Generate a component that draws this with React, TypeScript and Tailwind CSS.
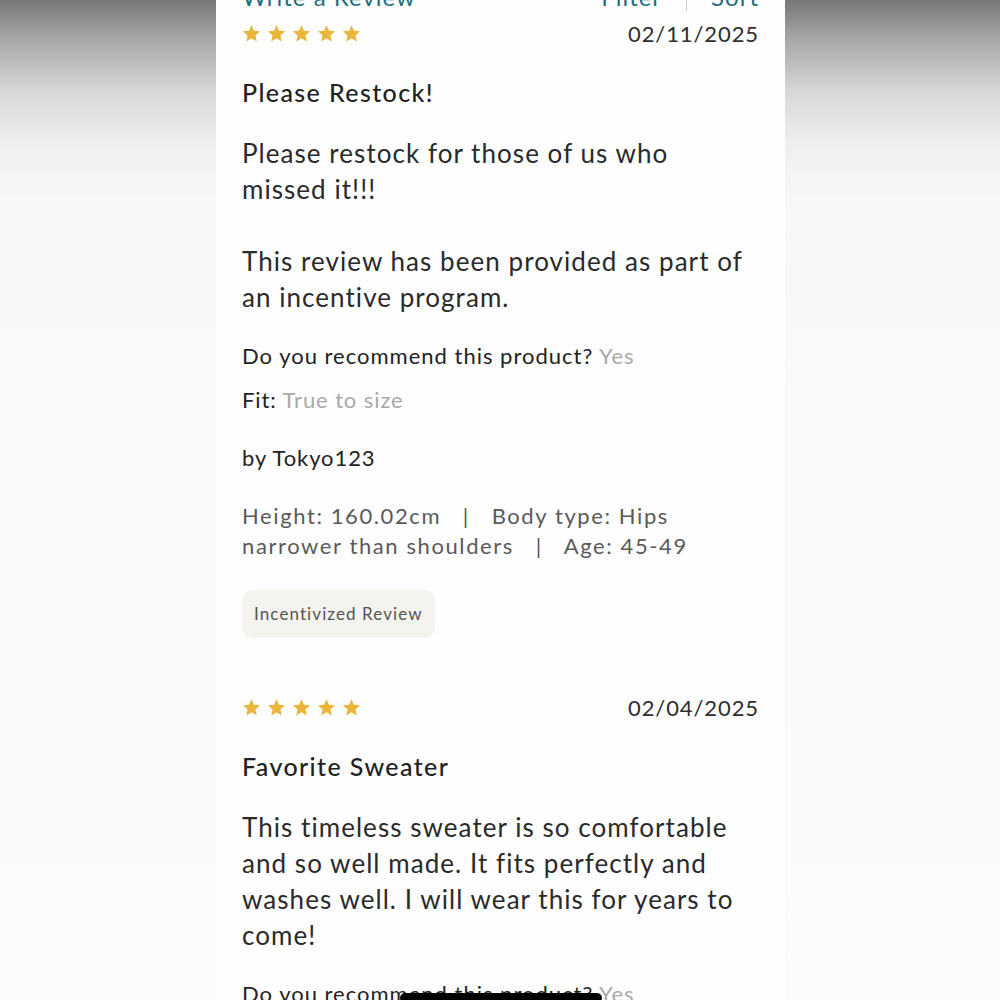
import React from 'react'

const Stars = () => (
  <div className="flex items-center gap-[6px]">
    {[0, 1, 2, 3, 4].map(i => (
      <svg key={i} width="19" height="19" viewBox="0 0 24 24" className="fill-[#e9b53a]">
        <path d="M12 1.5l3.1 7.1 7.7.7-5.8 5.1 1.7 7.6L12 18l-6.7 4 1.7-7.6-5.8-5.1 7.7-.7z" />
      </svg>
    ))}
  </div>
)

type Review = {
  date: string
  title: string
  body: string[][]
  meta?: boolean
}

const ReviewBlock = ({ r }: { r: Review }) => (
  <div className="flex flex-col">
    <div className="flex items-center justify-between h-[24px]">
      <Stars />
      <span className="text-[22px] text-[#2e2e2e] tracking-[0.9px]">{r.date}</span>
    </div>
    <h3 className="mt-[32px] text-[25px] leading-[30px] font-medium text-[#222] tracking-[1.4px]">{r.title}</h3>
    <div className="mt-[28px] flex flex-col gap-[36px] text-[26px] leading-[36px] text-[#2a2a2a] tracking-[1.05px]">
      {r.body.map((para, i) => (
        <p key={i} className="flex flex-col">
          {para.map((line, j) => (
            <span key={j} className="whitespace-nowrap">{line}</span>
          ))}
        </p>
      ))}
    </div>
    <div className="mt-[26px] text-[22px] leading-[30px] text-[#222] tracking-[1px]">
      Do you recommend this product? <span className="text-[#a9a9a9]">Yes</span>
    </div>
    {r.meta && (
      <>
        <div className="mt-[14px] text-[22px] leading-[30px] text-[#222] tracking-[0.9px]">
          Fit: <span className="text-[#a9a9a9]">True to size</span>
        </div>
        <div className="mt-[28px] text-[22px] leading-[30px] text-[#222] tracking-[0.9px]">by Tokyo123</div>
        <div className="mt-[28px] flex flex-col text-[22px] leading-[30px] text-[#5a5a5a] tracking-[1.6px]">
          <span className="whitespace-nowrap">Height: 160.02cm&nbsp;&nbsp;&nbsp;|&nbsp;&nbsp;&nbsp;Body type: Hips</span>
          <span className="whitespace-nowrap">narrower than shoulders&nbsp;&nbsp;&nbsp;|&nbsp;&nbsp;&nbsp;Age: 45-49</span>
        </div>
        <div className="mt-[29px] self-start rounded-[10px] bg-[#f4f3ef] px-[12px] h-[48px] flex items-center text-[17px] text-[#555] tracking-[1.1px]">
          Incentivized Review
        </div>
      </>
    )}
  </div>
)

const reviews: Review[] = [
  {
    date: '02/11/2025',
    title: 'Please Restock!',
    body: [
      ['Please restock for those of us who', 'missed it!!!'],
      ['This review has been provided as part of', 'an incentive program.'],
    ],
    meta: true,
  },
  {
    date: '02/04/2025',
    title: 'Favorite Sweater',
    body: [
      [
        'This timeless sweater is so comfortable',
        'and so well made. It fits perfectly and',
        'washes well. I will wear this for years to',
        'come!',
      ],
    ],
  },
]

export default function App() {
  return (
    <div
      className="relative w-[1000px] h-[1000px] overflow-hidden flex bg-[linear-gradient(to_bottom,#777_0px,#a8a8a8_40px,#d6d6d6_90px,#eeeeee_140px,#f8f8f8_200px,#fbfbfb_100%)]"
      style={{ fontFamily: 'Lato, "Noto Sans", sans-serif' }}
    >
      <div className="ml-[216px] w-[569px] h-full bg-[#fefefe] px-[26px] overflow-hidden">
        <div className="-mt-[18px] flex items-center justify-between h-[30px] text-[24px] text-[#1f6f7d] tracking-[1px]">
          <span>Write a Review</span>
          <div className="flex items-center gap-[24px]">
            <span>Filter</span>
            <span className="h-[28px] w-px bg-[#ccc]" />
            <span>Sort</span>
          </div>
        </div>
        <div className="mt-[9px] flex flex-col gap-[57px]">
          {reviews.map((r, i) => (
            <ReviewBlock key={i} r={r} />
          ))}
        </div>
      </div>
      <div className="absolute left-[400px] top-[993px] w-[202px] h-[10px] rounded-full bg-black" />
    </div>
  )
}
